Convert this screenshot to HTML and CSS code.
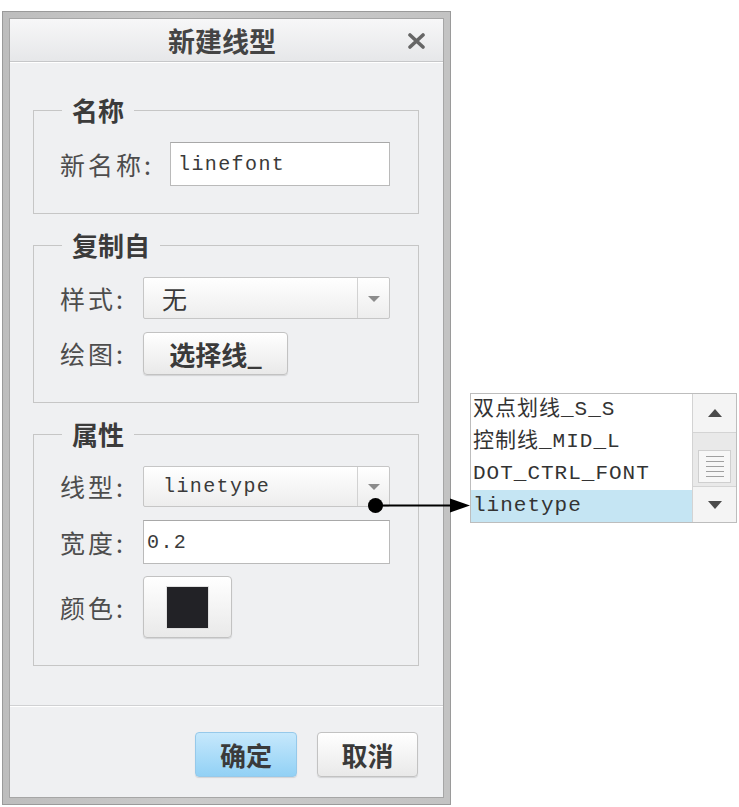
FILE: index.html
```html
<!DOCTYPE html>
<html lang="zh-CN">
<head>
  <meta charset="UTF-8">
  <title>新建线型</title>
  <meta name="viewport" content="width=device-width, initial-scale=1.0">
  <link rel="stylesheet" href="styles.css">
</head>
<body>
  <div class="page">
    <div class="dialog">
      <div class="win">
        <div class="titlebar">
          <span class="title">新建线型</span>
          <svg class="close" width="17" height="16" viewBox="0 0 17 16">
            <path d="M2 2 L15 14 M15 2 L2 14" stroke="#666" stroke-width="3.6" stroke-linecap="round"/>
          </svg>
        </div>
        <div class="body">
          <fieldset class="group">
            <legend>名称</legend>
            <div class="row">
              <span class="lbl lbl-wide">新名称:</span>
              <div class="input mono name-input">linefont</div>
            </div>
          </fieldset>
          <fieldset class="group">
            <legend>复制自</legend>
            <div class="row">
              <span class="lbl">样式:</span>
              <div class="select h42">
                <span class="sel-text">无</span>
                <span class="sel-arrow"></span>
              </div>
            </div>
            <div class="row">
              <span class="lbl">绘图:</span>
              <button class="btn pick">选择线_</button>
            </div>
          </fieldset>
          <fieldset class="group">
            <legend>属性</legend>
            <div class="row">
              <span class="lbl">线型:</span>
              <div class="select h41">
                <span class="sel-text mono">linetype</span>
                <span class="sel-arrow"></span>
              </div>
            </div>
            <div class="row">
              <span class="lbl">宽度:</span>
              <div class="input mono width-input">0.2</div>
            </div>
            <div class="row">
              <span class="lbl">颜色:</span>
              <button class="btn color"><span class="swatch"></span></button>
            </div>
          </fieldset>
        </div>
        <div class="footer">
          <button class="btn action primary">确定</button>
          <button class="btn action">取消</button>
        </div>
      </div>
    </div>

    <div class="list">
      <div class="items">
        <div class="item">双点划线_S_S</div>
        <div class="item">控制线_MID_L</div>
        <div class="item">DOT_CTRL_FONT</div>
        <div class="item selected">linetype</div>
      </div>
      <div class="scroll">
        <div class="sb-btn up"><span class="tri-up"></span></div>
        <div class="track"></div>
        <div class="thumb">
          <span></span><span></span><span></span><span></span><span></span>
        </div>
        <div class="sb-btn down"><span class="tri-down"></span></div>
      </div>
    </div>

    <!-- 指示线：从下拉箭头指向列表 -->
    <svg class="callout" width="106" height="20" viewBox="0 0 106 20">
      <circle cx="9.5" cy="9.5" r="7.5" fill="#000"/>
      <line x1="12" y1="9.5" x2="88" y2="9.5" stroke="#000" stroke-width="2"/>
      <polygon points="84,2.5 104,9.5 84,16.5" fill="#000"/>
    </svg>
  </div>
</body>
</html>
```

FILE: styles.css
```css
body{
  margin: 0;
  background: #fff;
  font-family: "Noto Sans CJK SC", "Liberation Sans", sans-serif;
  color: #4a4a4a;
}
.page{
  position: relative;
  display: flex;
  align-items: flex-start;
  padding: 11px 0 0 2px;
}
.mono{
  font-family: "Liberation Mono", "Noto Sans CJK SC", monospace;
}

/* 对话框外框 */
.dialog{
  width: 449px;
  height: 794px;
  box-sizing: border-box;
  border: 1px solid #9a9a9a;
  background: linear-gradient(90deg, #bdbdbd, #cbcbcb 40%, #c3c3c3);
  padding: 6px;
  flex: none;
}
.win{
  height: 100%;
  box-sizing: border-box;
  border: 1px solid #a6a6a6;
  background: #eff0f2;
  display: flex;
  flex-direction: column;
}
.titlebar{
  height: 42px;
  display: flex;
  align-items: center;
  background: linear-gradient(#f7f7f8, #e6e7e9);
  border-bottom: 1px solid #c6c7c9;
  box-shadow: 0 1px 0 #fff;
  padding-left: 26px;
}
.title{
  flex: 1;
  text-align: center;
  font-size: 27px;
  font-weight: bold;
  color: #444;
  line-height: 1;
}
.close{
  margin-right: 18px;
  margin-top: 2px;
}

.body{
  flex: 1;
  padding: 34px 24px 0 23px;
}
.group{
  margin: 0 0 17px;
  padding: 18px 27px 27px 26px;
  border: 1px solid #c6c6c6;
  min-width: 0;
}
.group legend{
  margin-left: 2px;
  padding: 0 10px;
  font-size: 26px;
  line-height: 28px;
  font-weight: bold;
  color: #3b3b3b;
}
.row{
  display: flex;
  align-items: center;
}
.row + .row{
  margin-top: 13px;
}
.group:last-child .row:last-child{
  margin-top: 12px;
}
.lbl{
  width: 83px;
  flex: none;
  font-size: 25px;
  letter-spacing: 3px;
  line-height: 1;
  color: #4d4d4d;
}
.lbl-wide{
  width: 110px;
}

.input{
  height: 44px;
  box-sizing: border-box;
  border: 1px solid #bababa;
  border-top-color: #a8a8a8;
  background: #fff;
  display: flex;
  align-items: center;
  font-size: 20px;
  letter-spacing: 1.4px;
  color: #3a3a3a;
}
.name-input{
  width: 220px;
  padding-left: 7px;
}
.width-input{
  width: 247px;
  padding-left: 3px;
}

.select{
  width: 247px;
  box-sizing: border-box;
  border: 1px solid #c6c6c6;
  border-radius: 2px;
  background: linear-gradient(#ffffff, #ededed);
  display: flex;
  align-items: stretch;
}
.h42{ height: 42px; }
.h41{ height: 41px; }
.sel-text{
  flex: 1;
  display: flex;
  align-items: center;
  padding-left: 18px;
  font-size: 25px;
  color: #3a3a3a;
}
.sel-text.mono{
  font-size: 20px;
  letter-spacing: 1.4px;
  padding-left: 19px;
}
.sel-arrow{
  width: 31px;
  border-left: 1px solid #d2d2d2;
  display: flex;
  align-items: center;
  justify-content: center;
}
.sel-arrow::before{
  content: "";
  border-left: 6px solid transparent;
  border-right: 6px solid transparent;
  border-top: 6px solid #8c8c8c;
  margin-top: 1px;
}

.btn{
  box-sizing: border-box;
  border: 1px solid #c2c2c2;
  border-radius: 4px;
  background: linear-gradient(#ffffff, #e9e9e9);
  box-shadow: 0 1px 1px rgba(0,0,0,0.12);
  font-family: "Noto Sans CJK SC", sans-serif;
  font-weight: bold;
  font-size: 26px;
  color: #3a3a3a;
  padding: 0;
  line-height: 1;
  display: flex;
  align-items: center;
  justify-content: center;
}
.pick{
  width: 145px;
  height: 43px;
}
.color{
  width: 89px;
  height: 62px;
}
.swatch{
  width: 41px;
  height: 41px;
  background: #222226;
  box-shadow: 0 0 0 1px #e0e0e0;
}

.footer{
  height: 92px;
  box-sizing: border-box;
  border-top: 1px solid #d0d1d3;
  box-shadow: inset 0 1px 0 #fff;
  display: flex;
  justify-content: flex-end;
  align-items: flex-start;
  gap: 20px;
  padding: 26px 25px 0 0;
}
.action{
  width: 101px;
  height: 45px;
}
.primary{
  width: 102px;
  border-color: #96c9ea;
  background: linear-gradient(#c6e8fc, #92d1f5);
}

/* 弹出的线型列表 */
.list{
  margin: 382px 0 0 19px;
  width: 265px;
  display: flex;
  border: 1px solid #bdbdbd;
  background: #fff;
  flex: none;
}
.items{
  width: 221px;
}
.item{
  height: 32px;
  line-height: 32px;
  padding-left: 2px;
  font-family: "Liberation Mono", "Noto Sans CJK SC", monospace;
  font-size: 21px;
  letter-spacing: 1px;
  color: #333;
  white-space: nowrap;
}
.item.selected{
  background: #c5e5f3;
}
.scroll{
  flex: 1;
  border-left: 1px solid #d3d3d3;
  background: #e9e9e9;
  display: flex;
  flex-direction: column;
}
.sb-btn{
  display: flex;
  align-items: center;
  justify-content: center;
  background: #f4f4f4;
}
.up{
  height: 38px;
  border-bottom: 1px solid #d4d4d4;
}
.down{
  height: 35px;
  border-top: 1px solid #d4d4d4;
  margin-top: 3px;
}
.tri-up{
  border-left: 7px solid transparent;
  border-right: 7px solid transparent;
  border-bottom: 8px solid #4a4a4a;
}
.tri-down{
  border-left: 7px solid transparent;
  border-right: 7px solid transparent;
  border-top: 8px solid #4a4a4a;
}
.track{
  height: 17px;
}
.thumb{
  height: 33px;
  box-sizing: border-box;
  margin: 0 5px;
  border: 1px solid #cfcfcf;
  background: #f7f7f7;
  display: flex;
  flex-direction: column;
  align-items: center;
  justify-content: center;
  gap: 4px;
}
.thumb span{
  display: block;
  width: 18px;
  height: 1px;
  background: #a0a0a0;
}

.callout{
  position: absolute;
  left: 366px;
  top: 496px;
}
```
